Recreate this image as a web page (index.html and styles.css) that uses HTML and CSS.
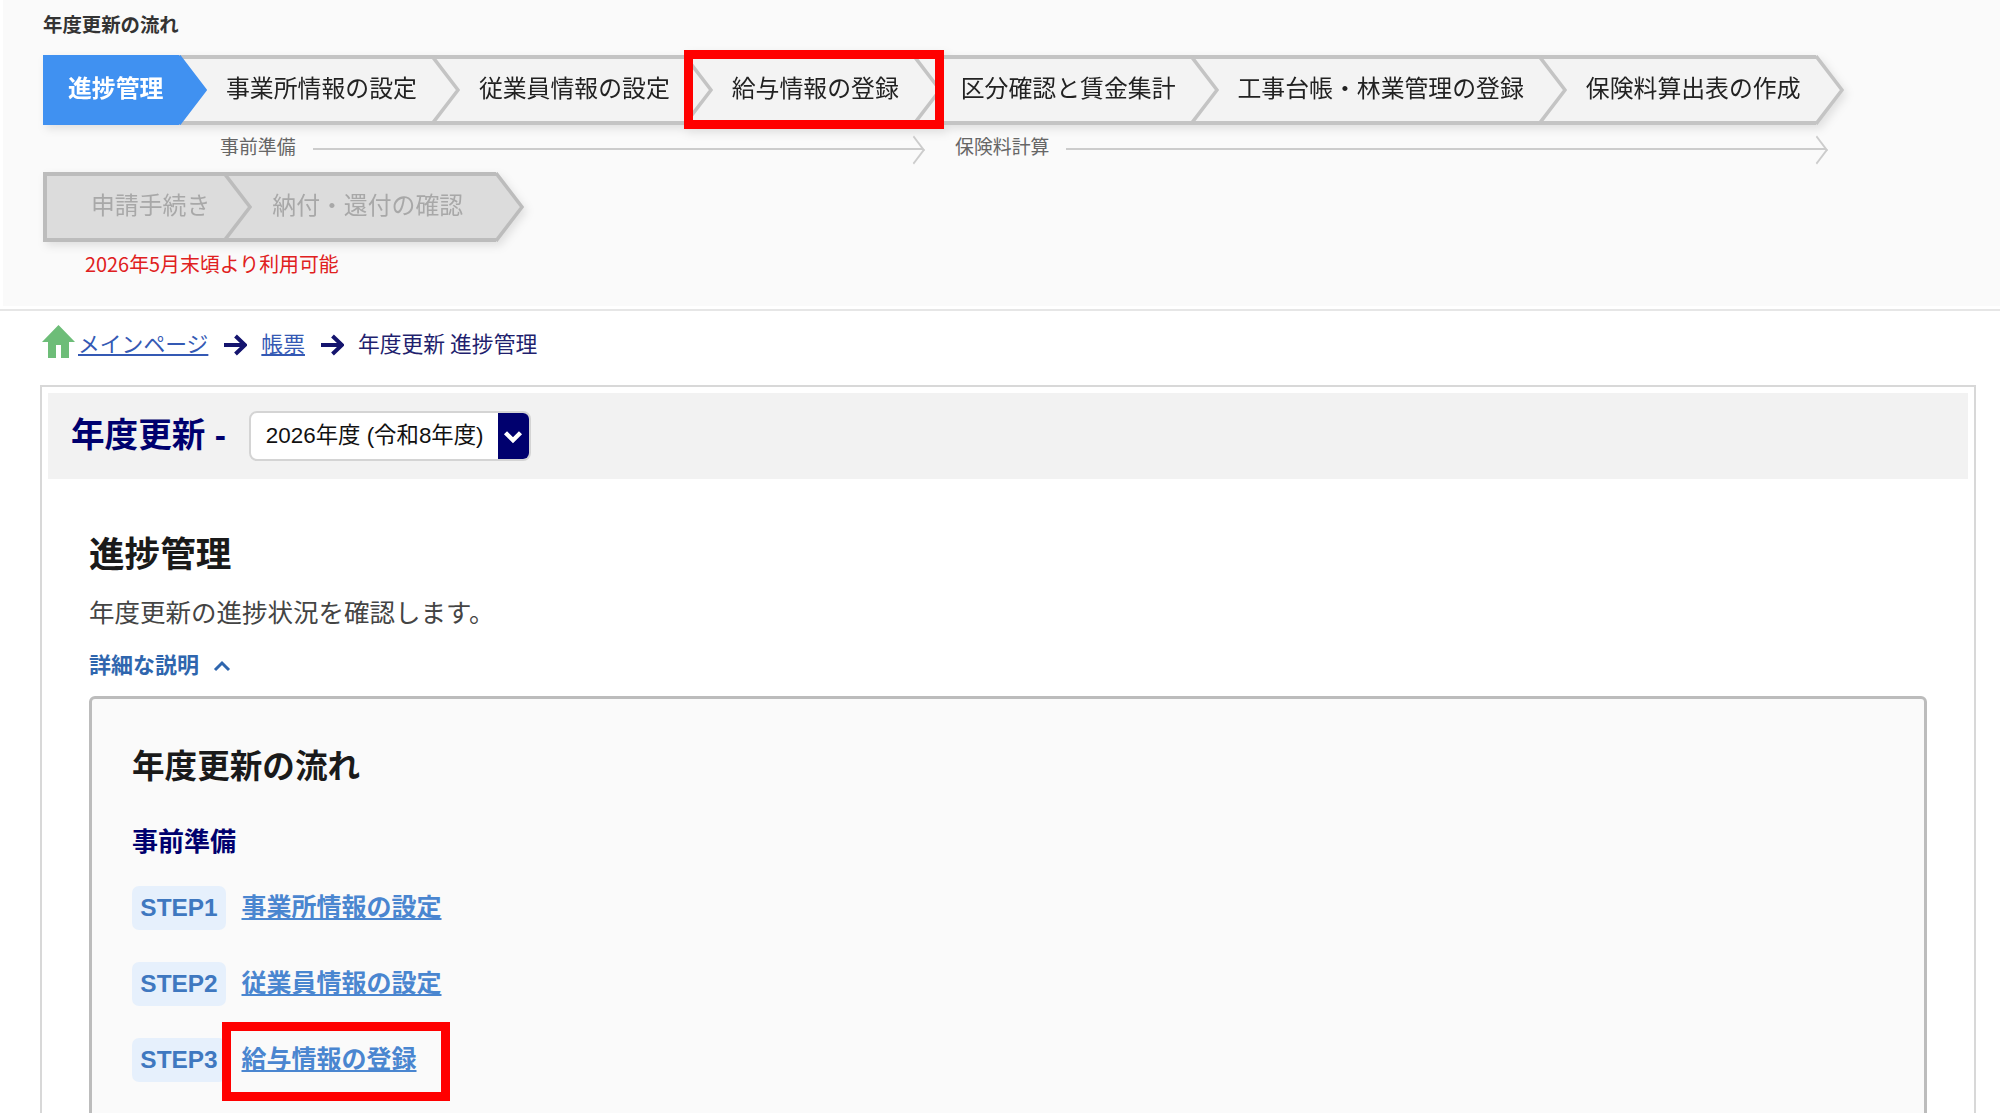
FILE: index.html
```html
<!DOCTYPE html>
<html lang="ja">
<head>
<meta charset="utf-8">
<title>年度更新 進捗管理</title>
<link rel="stylesheet" href="styles.css">
</head>
<body>
<header class="flow">
  <div class="flow-title">年度更新の流れ</div>
  <div class="steps">
    <div class="step step-current step-first">進捗管理<svg class="tip" viewBox="0 0 28 70"><polyline points="0,1 26,35 0,69"/></svg></div>
    <div class="step">事業所情報の設定<svg class="tip" viewBox="0 0 28 70"><polyline points="0,1 26,35 0,69"/></svg></div>
    <div class="step">従業員情報の設定<svg class="tip" viewBox="0 0 28 70"><polyline points="0,1 26,35 0,69"/></svg></div>
    <div class="step">給与情報の登録<svg class="tip" viewBox="0 0 28 70"><polyline points="0,1 26,35 0,69"/></svg><span class="mark mark-step"></span></div>
    <div class="step">区分確認と賃金集計<svg class="tip" viewBox="0 0 28 70"><polyline points="0,1 26,35 0,69"/></svg></div>
    <div class="step">工事台帳・林業管理の登録<svg class="tip" viewBox="0 0 28 70"><polyline points="0,1 26,35 0,69"/></svg></div>
    <div class="step">保険料算出表の作成<svg class="tip" viewBox="0 0 28 70"><polyline points="0,1 26,35 0,69"/></svg></div>
  </div>
  <div class="phases">
    <div class="phase phase-a"><span>事前準備</span><i class="phase-line"></i></div>
    <div class="phase phase-b"><span>保険料計算</span><i class="phase-line"></i></div>
  </div>
  <div class="steps steps-off">
    <div class="step step-off step-off-first">申請手続き<svg class="tip" viewBox="0 0 28 70"><polyline points="0,1 26,35 0,69"/></svg></div>
    <div class="step step-off step-off-last">納付・還付の確認<svg class="tip" viewBox="0 0 28 70"><polyline points="0,1 26,35 0,69"/></svg></div>
  </div>
  <div class="flow-note">2026年5月末頃より利用可能</div>
</header>
<nav class="crumbs">
  <svg class="home" viewBox="0 0 33 33"><path d="M16.5 0 L33 17 H27 V33 H19 V20 H14 V33 H6 V17 H0 Z"/></svg>
  <a href="#">メインページ</a>
  <svg class="crumb-arrow" viewBox="0 0 24 22"><path d="M1 11 H21 M12.5 2 L22 11 L12.5 20"/></svg>
  <a href="#">帳票</a>
  <svg class="crumb-arrow" viewBox="0 0 24 22"><path d="M1 11 H21 M12.5 2 L22 11 L12.5 20"/></svg>
  <span>年度更新 進捗管理</span>
</nav>
<main class="box">
  <div class="box-head">
    <div class="box-title">年度更新 -</div>
    <div class="year-select">
      <span class="year-value">2026年度 (令和8年度)</span>
      <span class="year-btn"><svg viewBox="0 0 16 12"><path d="M2 3 L8 9 L14 3"/></svg></span>
    </div>
  </div>
  <div class="content">
    <h1>進捗管理</h1>
    <p class="lead">年度更新の進捗状況を確認します。</p>
    <div class="toggle">詳細な説明<svg viewBox="0 0 18 12"><path d="M2 10 L9 3 L16 10"/></svg></div>
    <section class="panel">
      <h2>年度更新の流れ</h2>
      <h3>事前準備</h3>
      <ul class="list">
        <li><span class="badge">STEP1</span><a href="#">事業所情報の設定</a></li>
        <li><span class="badge">STEP2</span><a href="#">従業員情報の設定</a></li>
        <li><span class="badge">STEP3</span><a href="#">給与情報の登録<span class="mark mark-link"></span></a></li>
      </ul>
    </section>
  </div>
</main>
</body>
</html>
```
FILE: styles.css
```css
* { box-sizing: border-box; }
html, body { margin: 0; height: 100%; overflow: hidden; }
body {
  background: #fff;
  color: #222;
  font-family: "Noto Sans CJK JP", "Liberation Sans", sans-serif;
}

/* flow header */
.flow {
  height: 306px;
  margin-left: 3px;
  padding: 9px 0 0 40px;
  background: #fafafa;
}
.flow-title {
  font-size: 19.4px;
  line-height: 30px;
  font-weight: 700;
  margin-bottom: 16px;
  color: #333;
}
.steps {
  display: flex;
  filter: drop-shadow(3px 4px 4px rgba(0, 0, 0, .1));
}
.step {
  position: relative;
  display: flex;
  align-items: center;
  height: 70px;
  padding: 0 15px 7px 47px;
  background: #f3f3f3;
  border-top: 4px solid #c4c4c4;
  border-bottom: 4px solid #c4c4c4;
  font-size: 23.86px;
  line-height: 1;
  white-space: nowrap;
  color: #222;
}
.tip {
  position: absolute;
  top: -4px;
  right: -28px;
  width: 28px;
  height: 70px;
  z-index: 1;
  fill: #f3f3f3;
  stroke: #c4c4c4;
  stroke-width: 3.5;
}
.step-current {
  padding: 0 16px 7px 25px;
  background: #4091f1;
  border-color: #4091f1;
  color: #fff;
  font-weight: 700;
}
.step-current .tip { fill: #4091f1; stroke: #4091f1; }
.step-first { width: 136px; }
.step-off {
  background: #dcdcdc;
  border-color: #bcbcbc;
  color: #a8a8a8;
}
.step-off .tip { fill: #dcdcdc; stroke: #bcbcbc; }
.step-off-first {
  border-left: 4px solid #bcbcbc;
  padding-left: 44px;
  padding-right: 14px;
}
.step-off-last { padding-left: 48px; padding-right: 33px; }

.mark {
  position: absolute;
  border: 9px solid #ff0000;
  z-index: 2;
  pointer-events: none;
}
.mark-step { top: -9px; bottom: -8px; left: -1px; width: 260px; }
.mark-link { top: -20px; bottom: -23px; left: -19.5px; width: 228px; }

.phases {
  display: flex;
  height: 47px;
  padding: 0 0 4px 177px;
  align-items: center;
}
.phase {
  display: flex;
  align-items: center;
  font-size: 18.9px;
  line-height: 1;
  color: #666;
}
.phase-a { width: 703px; gap: 17px; }
.phase-b { width: 871px; margin-left: 32px; gap: 17px; }
.phase-line {
  position: relative;
  flex: 1;
  height: 2px;
  margin-top: 4px;
  background: #ccc;
}
.phase-line::after {
  content: "";
  position: absolute;
  right: 0;
  top: -7px;
  width: 16px;
  height: 16px;
  border-top: 2px solid #ccc;
  border-right: 2px solid #ccc;
  transform: rotate(45deg) skew(8deg, 8deg);
}
.flow-note {
  margin-top: 8px;
  padding-left: 42px;
  font-size: 19.9px;
  line-height: 28px;
  color: #e02020;
}

/* breadcrumbs */
.crumbs {
  display: flex;
  align-items: center;
  height: 76px;
  margin-top: 3px;
  padding: 0 0 10px 42px;
  border-top: 2px solid #e6e6e6;
  font-size: 21.8px;
  line-height: 30px;
  color: #1f1f6e;
}
.crumbs a { color: #3459b4; text-decoration: underline; }
.home { width: 33px; height: 33px; margin-right: 3px; margin-top: -3px; fill: #6dbd78; }
.crumb-arrow {
  width: 24px;
  height: 22px;
  margin: 4px 14px 0 15px;
  fill: none;
  stroke: #14146e;
  stroke-width: 4;
}

/* main box */
.box {
  margin-left: 40px;
  width: 1936px;
  min-height: 900px;
  padding: 6px;
  border: 2px solid #d8d8d8;
  font-family: "Liberation Sans", "Noto Sans CJK JP", sans-serif;
}
.box-head {
  display: flex;
  align-items: center;
  gap: 23px;
  height: 86px;
  padding-left: 23px;
  background: #f2f2f2;
}
.box-title {
  font-size: 33.6px;
  line-height: 44px;
  font-weight: 700;
  color: #00006e;
}
.year-select {
  display: flex;
  width: 282px;
  height: 50px;
  background: #fff;
  border: 2px solid #d4d4d4;
  border-radius: 8px;
  overflow: hidden;
}
.year-value {
  flex: 1;
  padding-left: 15px;
  font-size: 22.4px;
  line-height: 46px;
  color: #111;
  white-space: nowrap;
}
.year-btn {
  display: flex;
  align-items: center;
  justify-content: center;
  width: 31px;
  background: #00006e;
}
.year-btn svg {
  width: 20px;
  height: 15px;
  fill: none;
  stroke: #fff;
  stroke-width: 3.5;
}
.content { padding: 51px 41px 0 41px; }
h1 {
  margin: 0;
  font-size: 35.6px;
  line-height: 50px;
  font-weight: 700;
  color: #1a1a1a;
}
.lead {
  margin: 15px 0 0;
  font-size: 25.5px;
  line-height: 36px;
  color: #444;
}
.toggle {
  display: flex;
  align-items: center;
  gap: 14px;
  margin-top: 20px;
  font-size: 22px;
  line-height: 30px;
  font-weight: 700;
  color: #2f66ae;
}
.toggle svg {
  width: 18px;
  height: 12px;
  fill: none;
  stroke: #2f66ae;
  stroke-width: 3;
}
.panel {
  min-height: 700px;
  margin-top: 15px;
  padding: 46px 40px 0;
  background: #fafafa;
  border: 3px solid #bcbcbc;
  border-radius: 6px;
}
h2 {
  margin: 0;
  font-size: 32.6px;
  line-height: 44px;
  font-weight: 700;
  color: #1a1a1a;
}
h3 {
  margin: 35px 0 0;
  font-size: 26px;
  line-height: 36px;
  font-weight: 700;
  color: #00006e;
}
.list {
  display: flex;
  flex-direction: column;
  gap: 32px;
  margin: 26px 0 0;
  padding: 0;
  list-style: none;
}
.list li {
  display: flex;
  align-items: center;
  gap: 15.5px;
  height: 44px;
}
.badge {
  width: 94px;
  height: 44px;
  background: #e6f0fc;
  border-radius: 7px;
  font-size: 24.4px;
  line-height: 44px;
  font-weight: 700;
  text-align: center;
  color: #3f78c0;
}
.list a {
  position: relative;
  padding-bottom: 2px;
  font-size: 25px;
  line-height: 34px;
  font-weight: 700;
  color: #4a86d0;
  text-decoration: underline;
}
```
